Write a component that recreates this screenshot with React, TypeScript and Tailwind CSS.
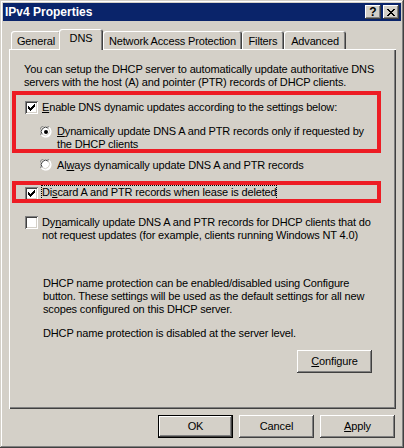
import React from "react";

const raised =
  "bg-[#d4d0c8] shadow-[inset_-1px_-1px_#404040,inset_1px_1px_#ffffff,inset_-2px_-2px_#808080,inset_2px_2px_#d4d0c8]";

function Check() {
  const rows = [
    "......x",
    ".....xx",
    "x...xxx",
    "xx.xxx.",
    "xxxxx..",
    ".xxx...",
    "..x....",
  ];
  const rects: React.ReactElement[] = [];
  rows.forEach((r, y) =>
    r.split("").forEach((c, x) => {
      if (c === "x") rects.push(<rect key={`${x}-${y}`} x={x} y={y} width={1} height={1} fill="#000" />);
    })
  );
  return (
    <svg width="7" height="7" viewBox="0 0 7 7" shapeRendering="crispEdges">
      {rects}
    </svg>
  );
}

function Checkbox({ checked }: { checked: boolean }) {
  return (
    <div className="w-[13px] h-[13px] shrink-0 bg-white flex items-center justify-center shadow-[inset_1px_1px_#808080,inset_-1px_-1px_#ffffff,inset_2px_2px_#404040,inset_-2px_-2px_#d4d0c8]">
      {checked && <Check />}
    </div>
  );
}

function Radio({ checked }: { checked: boolean }) {
  return (
    <svg width="12" height="12" viewBox="0 0 12 12" className="shrink-0">
      <circle cx="6" cy="6" r="5.5" fill="#fff" />
      <path d="M1.2 9.2 A5.5 5.5 0 0 1 9.2 1.2" fill="none" stroke="#808080" strokeWidth="1" />
      <path d="M9.2 1.2 A5.5 5.5 0 0 1 1.2 9.2" fill="none" stroke="#ffffff" strokeWidth="1" />
      <path d="M2.3 8.5 A4.4 4.4 0 0 1 8.5 2.3" fill="none" stroke="#404040" strokeWidth="1" />
      <path d="M8.5 2.3 A4.4 4.4 0 0 1 2.3 8.5" fill="none" stroke="#d4d0c8" strokeWidth="1" />
      {checked && <circle cx="6" cy="6" r="2" fill="#000" />}
    </svg>
  );
}

function Btn({ children, def, className = "" }: { children: React.ReactNode; def?: boolean; className?: string }) {
  if (def) {
    return (
      <div className={`w-[75px] h-[23px] border border-black ${className}`}>
        <div className={`w-full h-full flex items-center justify-center ${raised}`}>{children}</div>
      </div>
    );
  }
  return (
    <div className={`w-[75px] h-[23px] flex items-center justify-center ${raised} ${className}`}>{children}</div>
  );
}

const tabBase =
  "h-[18px] pt-[3px] text-center bg-[#d4d0c8] rounded-t-[3px] shadow-[inset_1px_1px_#ffffff,inset_-1px_0_#404040,inset_-2px_0_#808080]";

export default function App() {
  return (
    <div
      className="w-[404px] h-[448px] bg-[#d4d0c8] p-[3px] flex flex-col text-black text-[11px] leading-[13px] tracking-[-0.15px] shadow-[inset_-1px_-1px_#404040,inset_1px_1px_#d4d0c8,inset_-2px_-2px_#808080,inset_2px_2px_#ffffff]"
      style={{ fontFamily: '"Liberation Sans", Arial, sans-serif' }}
    >
      {/* Title bar */}
      <div className="h-[18px] bg-[#0a246a] flex items-center justify-between pl-[2px] pr-[2px]">
        <span className="text-white font-bold text-[12px] tracking-normal">IPv4 Properties</span>
        <div className="flex gap-[2px]">
          <div className={`w-[16px] h-[14px] flex items-center justify-center ${raised}`}>
            <span className="font-bold text-[12px] leading-[12px] tracking-normal">?</span>
          </div>
          <div className={`w-[16px] h-[14px] flex items-center justify-center ${raised}`}>
            <svg width="8" height="7" viewBox="0 0 8 7" shapeRendering="crispEdges">
              <path d="M0 0h2v1h-2z M6 0h2v1h-2z M1 1h2v1h-2z M5 1h2v1h-2z M2 2h4v1h-4z M3 3h2v1h-2z M2 4h4v1h-4z M1 5h2v1h-2z M5 5h2v1h-2z M0 6h2v1h-2z M6 6h2v1h-2z" fill="#000" />
            </svg>
          </div>
        </div>
      </div>

      {/* Tabs */}
      <div className="mt-[8px] ml-[8px] flex items-end h-[20px]">
        <div className={`${tabBase} w-[50px] pt-[4px]`}>General</div>
        <div className="relative z-10 -ml-[2px] w-[44px] h-[21px] -mb-px pt-[3px] text-center bg-[#d4d0c8] rounded-t-[3px] shadow-[inset_1px_1px_#ffffff,inset_-1px_0_#404040,inset_-2px_0_#808080]">
          DNS
        </div>
        <div className={`${tabBase} w-[139px] pt-[4px]`}>Network Access Protection</div>
        <div className={`${tabBase} w-[42px] pt-[4px]`}>Filters</div>
        <div className={`${tabBase} w-[62px] pt-[4px]`}>Advanced</div>
      </div>

      {/* Panel */}
      <div className="relative ml-[6px] w-[387px] h-[360px] flex flex-col shadow-[inset_1px_1px_#ffffff,inset_-1px_-1px_#404040,inset_-2px_-2px_#808080]">
        <div className="pl-[15px] pt-[14px] whitespace-nowrap">
          <div>You can setup the DHCP server to automatically update authoritative DNS</div>
          <div>servers with the host (A) and pointer (PTR) records of DHCP clients.</div>
        </div>

        <div className="mt-[12px] pl-[16px] flex items-start gap-[4px] whitespace-nowrap">
          <Checkbox checked />
          <div>
            <span className="underline">E</span>nable DNS dynamic updates according to the settings below:
          </div>
        </div>

        <div className="mt-[11px] pl-[31px] flex items-start gap-[5px] whitespace-nowrap">
          <div className="mt-px">
            <Radio checked />
          </div>
          <div>
            <div>
              <span className="underline">D</span>ynamically update DNS A and PTR records only if requested by
            </div>
            <div>the DHCP clients</div>
          </div>
        </div>

        <div className="mt-[8px] pl-[31px] flex items-start gap-[5px] whitespace-nowrap">
          <Radio checked={false} />
          <div>
            Al<span className="underline">w</span>ays dynamically update DNS A and PTR records
          </div>
        </div>

        <div className="mt-[13px] pl-[16px] flex items-start gap-[3px] whitespace-nowrap">
          <div className="mt-[2px]">
            <Checkbox checked />
          </div>
          <div className="border border-dotted border-black">
            Di<span className="underline">s</span>card A and PTR records when lease is deleted
          </div>
        </div>

        <div className="mt-[16px] pl-[16px] flex items-start gap-[4px] whitespace-nowrap">
          <Checkbox checked={false} />
          <div>
            <div>
              Dy<span className="underline">n</span>amically update DNS A and PTR records for DHCP clients that do
            </div>
            <div>not request updates (for example, clients running Windows NT 4.0)</div>
          </div>
        </div>

        <div className="mt-[35px] pl-[34px] whitespace-nowrap">
          <div>DHCP name protection can be enabled/disabled using Configure</div>
          <div>button. These settings will be used as the default settings for all new</div>
          <div>scopes configured on this DHCP server.</div>
        </div>

        <div className="mt-[11px] pl-[34px] whitespace-nowrap">
          DHCP name protection is disabled at the server level.
        </div>

        <div className="mt-[10px] pr-[24px] flex justify-end">
          <Btn>
            <span>
              <span className="underline">C</span>onfigure
            </span>
          </Btn>
        </div>

        {/* Red annotation boxes */}
        <div className="absolute left-[3px] top-[42px] w-[369px] h-[62px] border-[4px] border-[#ed1c24] pointer-events-none" />
        <div className="absolute left-[3px] top-[132px] w-[369px] h-[22px] border-[4px] border-[#ed1c24] pointer-events-none" />
      </div>

      {/* Bottom buttons */}
      <div className="mt-[6px] pr-[6px] flex justify-end gap-[6px]">
        <Btn def>OK</Btn>
        <Btn>Cancel</Btn>
        <Btn>
          <span>
            <span className="underline">A</span>pply
          </span>
        </Btn>
      </div>
    </div>
  );
}
